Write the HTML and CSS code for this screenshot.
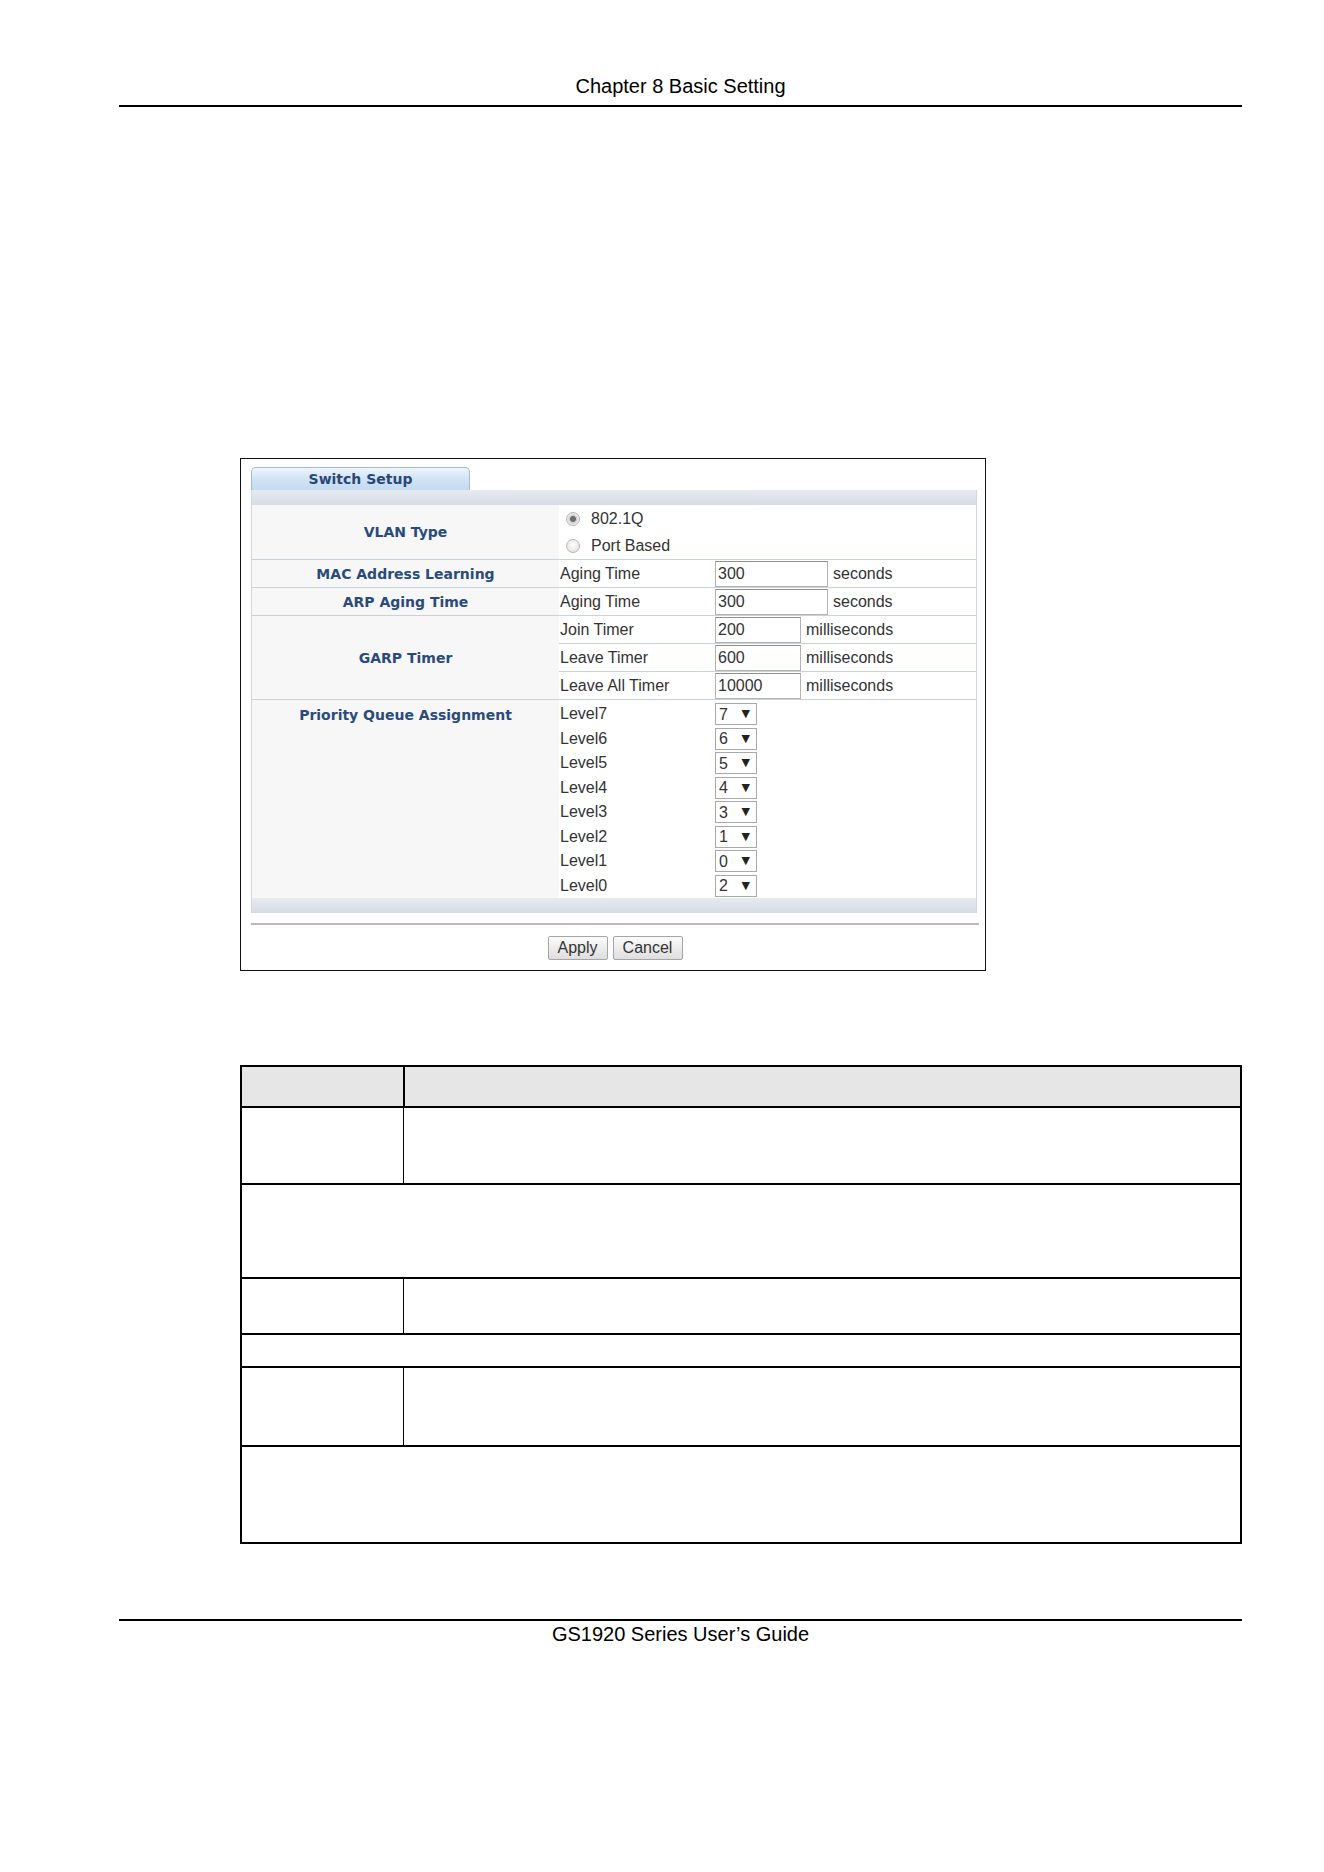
FILE: index.html
```html
<!DOCTYPE html>
<html lang="en">
<head>
    <meta charset="UTF-8">
    <meta name="viewport" content="width=device-width, initial-scale=1.0">
    <title>Chapter 8 Basic Setting</title>
    <link rel="stylesheet" href="styles.css">
</head>
<body>
    <header class="running-head">Chapter 8 Basic Setting</header>

    <!-- Switch Setup screen -->
    <div class="shot">
        <div class="tab">Switch Setup</div>
        <div class="panel">
            <div class="band"></div>
            <table class="setup">
                <colgroup>
                    <col class="c-name">
                    <col class="c-field">
                    <col>
                </colgroup>
                <tr>
                    <th>VLAN Type</th>
                    <td colspan="2" class="vlan">
                        <label class="opt"><input type="radio" name="vlan" checked>802.1Q</label>
                        <label class="opt"><input type="radio" name="vlan">Port Based</label>
                    </td>
                </tr>
                <tr>
                    <th>MAC Address Learning</th>
                    <td class="field">Aging Time</td>
                    <td><div class="val"><input type="text" class="num long" value="300"><span>seconds</span></div></td>
                </tr>
                <tr>
                    <th>ARP Aging Time</th>
                    <td class="field">Aging Time</td>
                    <td><div class="val"><input type="text" class="num long" value="300"><span>seconds</span></div></td>
                </tr>
                <tr>
                    <th rowspan="3">GARP Timer</th>
                    <td class="field">Join Timer</td>
                    <td><div class="val"><input type="text" class="num" value="200"><span>milliseconds</span></div></td>
                </tr>
                <tr>
                    <td class="field">Leave Timer</td>
                    <td><div class="val"><input type="text" class="num" value="600"><span>milliseconds</span></div></td>
                </tr>
                <tr>
                    <td class="field">Leave All Timer</td>
                    <td><div class="val"><input type="text" class="num" value="10000"><span>milliseconds</span></div></td>
                </tr>
                <tr class="last">
                    <th class="top">Priority Queue Assignment</th>
                    <td colspan="2">
                        <div class="levels">
                            <span>Level7</span><span class="pick"><select><option>7</option></select></span>
                            <span>Level6</span><span class="pick"><select><option>6</option></select></span>
                            <span>Level5</span><span class="pick"><select><option>5</option></select></span>
                            <span>Level4</span><span class="pick"><select><option>4</option></select></span>
                            <span>Level3</span><span class="pick"><select><option>3</option></select></span>
                            <span>Level2</span><span class="pick"><select><option>1</option></select></span>
                            <span>Level1</span><span class="pick"><select><option>0</option></select></span>
                            <span>Level0</span><span class="pick"><select><option>2</option></select></span>
                        </div>
                    </td>
                </tr>
            </table>
            <div class="band"></div>
        </div>
        <div class="actions">
            <button class="btn apply">Apply</button>
            <button class="btn cancel">Cancel</button>
        </div>
    </div>

    <!-- field description table -->
    <div class="desc">
        <div class="row head h1"><div class="key"></div><div class="text"></div></div>
        <div class="row h2"><div class="key"></div><div class="text"></div></div>
        <div class="row h3"></div>
        <div class="row h4"><div class="key"></div><div class="text"></div></div>
        <div class="row h5"></div>
        <div class="row h6"><div class="key"></div><div class="text"></div></div>
        <div class="row h7"></div>
    </div>

    <footer class="running-foot">GS1920 Series User’s Guide</footer>
</body>
</html>
```

FILE: styles.css
```css
body {
    margin: 0;
    font-family: "Liberation Sans", Arial, sans-serif;
    color: #000;
}

.running-head {
    margin: 0 82px 0 119px;
    padding: 74px 0 7px;
    font-size: 20px;
    line-height: 24px;
    text-align: center;
    border-bottom: 2px solid #000;
}

/* screen capture */
.shot {
    box-sizing: border-box;
    width: 746px;
    margin: 351px 0 0 240px;
    padding: 8px 8px 10px 10px;
    border: 1px solid #111;
    color: #333;
}

.tab {
    box-sizing: border-box;
    width: 219px;
    height: 23px;
    border: 1px solid #a9bacb;
    border-bottom: none;
    border-radius: 5px 5px 0 0;
    background: linear-gradient(#eef5fc, #d3e5f6 45%, #c3daf1);
    font-family: "DejaVu Sans", Verdana, sans-serif;
    font-weight: bold;
    font-size: 14px;
    line-height: 22px;
    text-align: center;
    color: #294878;
}

.panel {
    width: 724px;
    border-left: 1px solid #cfd7df;
    border-right: 1px solid #cfd7df;
}

.band {
    height: 15px;
    background: linear-gradient(#e6ebf0, #d4dce5);
}

.setup {
    width: 724px;
    table-layout: fixed;
    border-collapse: separate;
    border-spacing: 0;
    font-size: 16px;
}

.setup .c-name {
    width: 307px;
}

.setup .c-field {
    width: 155px;
}

.setup th,
.setup td {
    padding: 0;
    height: 27px;
    border-bottom: 1px solid #c9d1d9;
    background: #fff;
    vertical-align: middle;
}

.setup tr.last th,
.setup tr.last td {
    border-bottom: none;
}

.setup th {
    background: #f7f7f7;
    font-family: "DejaVu Sans", Verdana, sans-serif;
    font-size: 14px;
    font-weight: bold;
    color: #2b4a7c;
    text-align: center;
}

.setup th.top {
    vertical-align: top;
    padding-top: 3px;
    line-height: 24px;
}

.field {
    padding-left: 1px !important;
    white-space: nowrap;
}

.vlan {
    height: 54px !important;
}

.opt {
    display: flex;
    align-items: center;
    height: 27px;
}

.opt input {
    appearance: none;
    width: 14px;
    height: 14px;
    margin: 0 11px 0 7px;
    border: 1px solid #b4b4b4;
    border-radius: 50%;
    background: radial-gradient(circle at 50% 40%, #fff, #dcdcdc);
}

.opt input:checked {
    background: radial-gradient(circle, #6d6d6d 0 2.5px, #cfcfcf 3.5px, #f2f2f2 6px);
}

.val {
    display: flex;
    align-items: center;
    gap: 5px;
    padding-left: 1px;
}

.num {
    box-sizing: border-box;
    width: 86px;
    height: 26px;
    margin: 0;
    padding: 0 2px;
    border: 1px solid #b3b3b3;
    border-top-color: #8f8f8f;
    font: 16px "Liberation Sans", Arial, sans-serif;
    color: #333;
}

.num.long {
    width: 113px;
}

.levels {
    display: grid;
    grid-template-columns: 155px auto;
    grid-auto-rows: 24.5px;
    align-items: center;
    padding: 2px 0 0 1px;
}

.pick {
    position: relative;
    justify-self: start;
    margin-left: -1px;
    padding-left: 1px;
}

.pick select {
    appearance: none;
    box-sizing: border-box;
    display: block;
    width: 42px;
    height: 22px;
    margin: 0;
    padding: 0 0 0 3px;
    border: 1px solid #a9a9a9;
    border-radius: 0;
    background: #fff;
    font: 16px "Liberation Sans", Arial, sans-serif;
    color: #333;
}

/* drop-down caret */
.pick::after {
    content: "▼";
    position: absolute;
    right: 7px;
    top: 4px;
    font-family: "DejaVu Sans", sans-serif;
    font-size: 11px;
    line-height: 13px;
    color: #222;
    pointer-events: none;
}

.actions {
    display: flex;
    justify-content: center;
    gap: 5px;
    margin-top: 10px;
    padding-top: 11px;
    border-top: 2px solid #b9b9b9;
    width: 728px;
}

.btn {
    box-sizing: border-box;
    height: 24px;
    padding: 0;
    border: 1px solid #a6a6a6;
    border-radius: 2px;
    background: linear-gradient(#fbfbfb, #dedede);
    font: 16px "Liberation Sans", Arial, sans-serif;
    color: #333;
}

.apply {
    width: 60px;
}

.cancel {
    width: 70px;
}

/* description table */
.desc {
    box-sizing: border-box;
    width: 1002px;
    margin: 94px 0 0 240px;
    border: 2px solid #000;
}

.row {
    box-sizing: border-box;
    display: flex;
    border-top: 2px solid #000;
}

.row.head {
    border-top: none;
    background: #e6e6e6;
}

.key {
    width: 161px;
    border-right: 1px solid #000;
}

.row.head .key {
    border-right-width: 2px;
}

.text {
    flex: 1;
}

.h1 { height: 39px; }
.h2 { height: 77px; }
.h3 { height: 94px; }
.h4 { height: 56px; }
.h5 { height: 33px; }
.h6 { height: 79px; }
.h7 { height: 97px; }

.running-foot {
    margin: 75px 82px 0 119px;
    padding-top: 1px;
    font-size: 20px;
    line-height: 24px;
    text-align: center;
    border-top: 2px solid #000;
}
```
